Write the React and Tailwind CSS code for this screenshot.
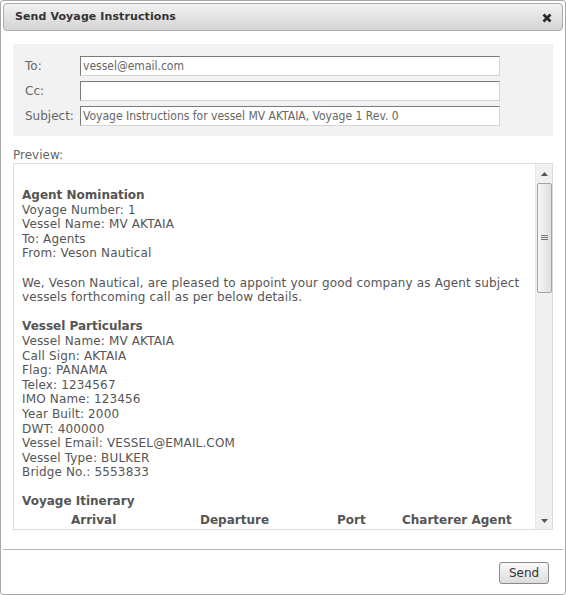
import { useState } from "react";

const font = { fontFamily: '"DejaVu Sans", Verdana, sans-serif' };

function Field({ label, value }) {
  return (
    <div className="flex items-center h-[20px]">
      <label className="w-[55px] text-[12px] text-[#666]">{label}</label>
      <input
        type="text"
        defaultValue={value}
        className="w-[420px] h-[20px] px-[2px] text-[12px] text-[#666] bg-white border border-t-[#7a7a7a] border-l-[#7a7a7a] border-r-[#d4d4d4] border-b-[#d4d4d4] outline-none"
        style={{ fontFamily: '"DejaVu Sans Condensed", "DejaVu Sans", sans-serif' }}
      />
    </div>
  );
}

function ScrollBar() {
  return (
    <div className="w-[17px] h-full bg-[#f0f0f0] border-l border-[#e8e8e8] flex flex-col items-center">
      <div className="h-[19px] flex items-center justify-center">
        <svg width="7" height="4" viewBox="0 0 7 4">
          <path d="M0 4 L3.5 0 L7 4 Z" fill="#555" />
        </svg>
      </div>
      <div className="w-[15px] h-[110px] rounded-[2px] border border-[#a3a3a3] bg-gradient-to-r from-[#f6f6f6] to-[#dedede] flex items-center justify-center">
        <svg width="7" height="6" viewBox="0 0 7 6">
          <path d="M0 0.5 H7 M0 2.5 H7 M0 4.5 H7" stroke="#777" strokeWidth="1" />
        </svg>
      </div>
      <div className="flex-1" />
      <div className="h-[17px] flex items-center justify-center">
        <svg width="7" height="4" viewBox="0 0 7 4">
          <path d="M0 0 L3.5 4 L7 0 Z" fill="#555" />
        </svg>
      </div>
    </div>
  );
}

function Preview() {
  const intro = [
    "Voyage Number: 1",
    "Vessel Name: MV AKTAIA",
    "To: Agents",
    "From: Veson Nautical",
  ];
  const particulars = [
    "Vessel Name: MV AKTAIA",
    "Call Sign: AKTAIA",
    "Flag: PANAMA",
    "Telex: 1234567",
    "IMO Name: 123456",
    "Year Built: 2000",
    "DWT: 400000",
    "Vessel Email: VESSEL@EMAIL.COM",
    "Vessel Type: BULKER",
    "Bridge No.: 5553833",
  ];
  return (
    <div className="flex-1 overflow-hidden pl-[8px] pt-[24px] text-[12px] leading-[14.6px] tracking-[0.15px] text-[#555]">
      <p className="font-bold tracking-normal">Agent Nomination</p>
      {intro.map((line) => (
        <p key={line}>{line}</p>
      ))}
      <p className="mt-[14.6px]">
        We, Veson Nautical, are pleased to appoint your good company as Agent subject
        <br />
        vessels forthcoming call as per below details.
      </p>
      <p className="mt-[14.6px] font-bold tracking-normal">Vessel Particulars</p>
      {particulars.map((line) => (
        <p key={line}>{line}</p>
      ))}
      <p className="mt-[14.6px] font-bold tracking-normal">Voyage Itinerary</p>
      <div className="flex font-bold tracking-normal mt-[4px] pl-[49px]">
        <span className="w-[129px]">Arrival</span>
        <span className="w-[137px]">Departure</span>
        <span className="w-[65px]">Port</span>
        <span>Charterer Agent</span>
      </div>
    </div>
  );
}

export default function App() {
  const [sent, setSent] = useState(false);

  return (
    <div
      className="w-[566px] h-[595px] bg-white border border-[#a8a8a8] rounded-[3px] p-[2px] flex flex-col"
      style={font}
    >
      <div className="h-[28px] shrink-0 rounded-[4px] border border-[#acacac] bg-gradient-to-b from-[#f2f2f2] to-[#d4d4d4] flex items-center justify-between pl-[11px] pr-[10px] pt-[1px]">
        <span className="text-[11px] font-bold text-[#333] tracking-[0.1px]">Send Voyage Instructions</span>
        <svg width="10" height="10" viewBox="0 0 10 10">
          <path d="M1.5 1.5 L8.5 8.5 M8.5 1.5 L1.5 8.5" stroke="#2a2a2a" strokeWidth="2.8" />
        </svg>
      </div>

      <div className="px-[10px]">
        <div className="mt-[13px] h-[92px] bg-[#f2f2f2] pl-[12px] pt-[12px] flex flex-col gap-[5px]">
          <Field label="To:" value="vessel@email.com" />
          <Field label="Cc:" value="" />
          <Field label="Subject:" value="Voyage Instructions for vessel MV AKTAIA, Voyage 1 Rev. 0" />
        </div>

        <p className="mt-[12px] text-[12px] leading-[14px] text-[#666]">Preview:</p>
        <div className="mt-[1px] h-[367px] border border-[#dedede] flex">
          <Preview />
          <ScrollBar />
        </div>
      </div>

      <div className="mt-[19px] border-t border-[#b4b4b4]" />
      <div className="flex justify-end pr-[14px] pt-[12px]">
        <button
          type="button"
          onClick={() => setSent(true)}
          className="w-[50px] h-[22px] rounded-[3px] border border-[#8a8a8a] bg-gradient-to-b from-[#fafafa] to-[#dcdcdc] text-[12px] text-[#333]"
        >
          {sent ? "Sent" : "Send"}
        </button>
      </div>
    </div>
  );
}
